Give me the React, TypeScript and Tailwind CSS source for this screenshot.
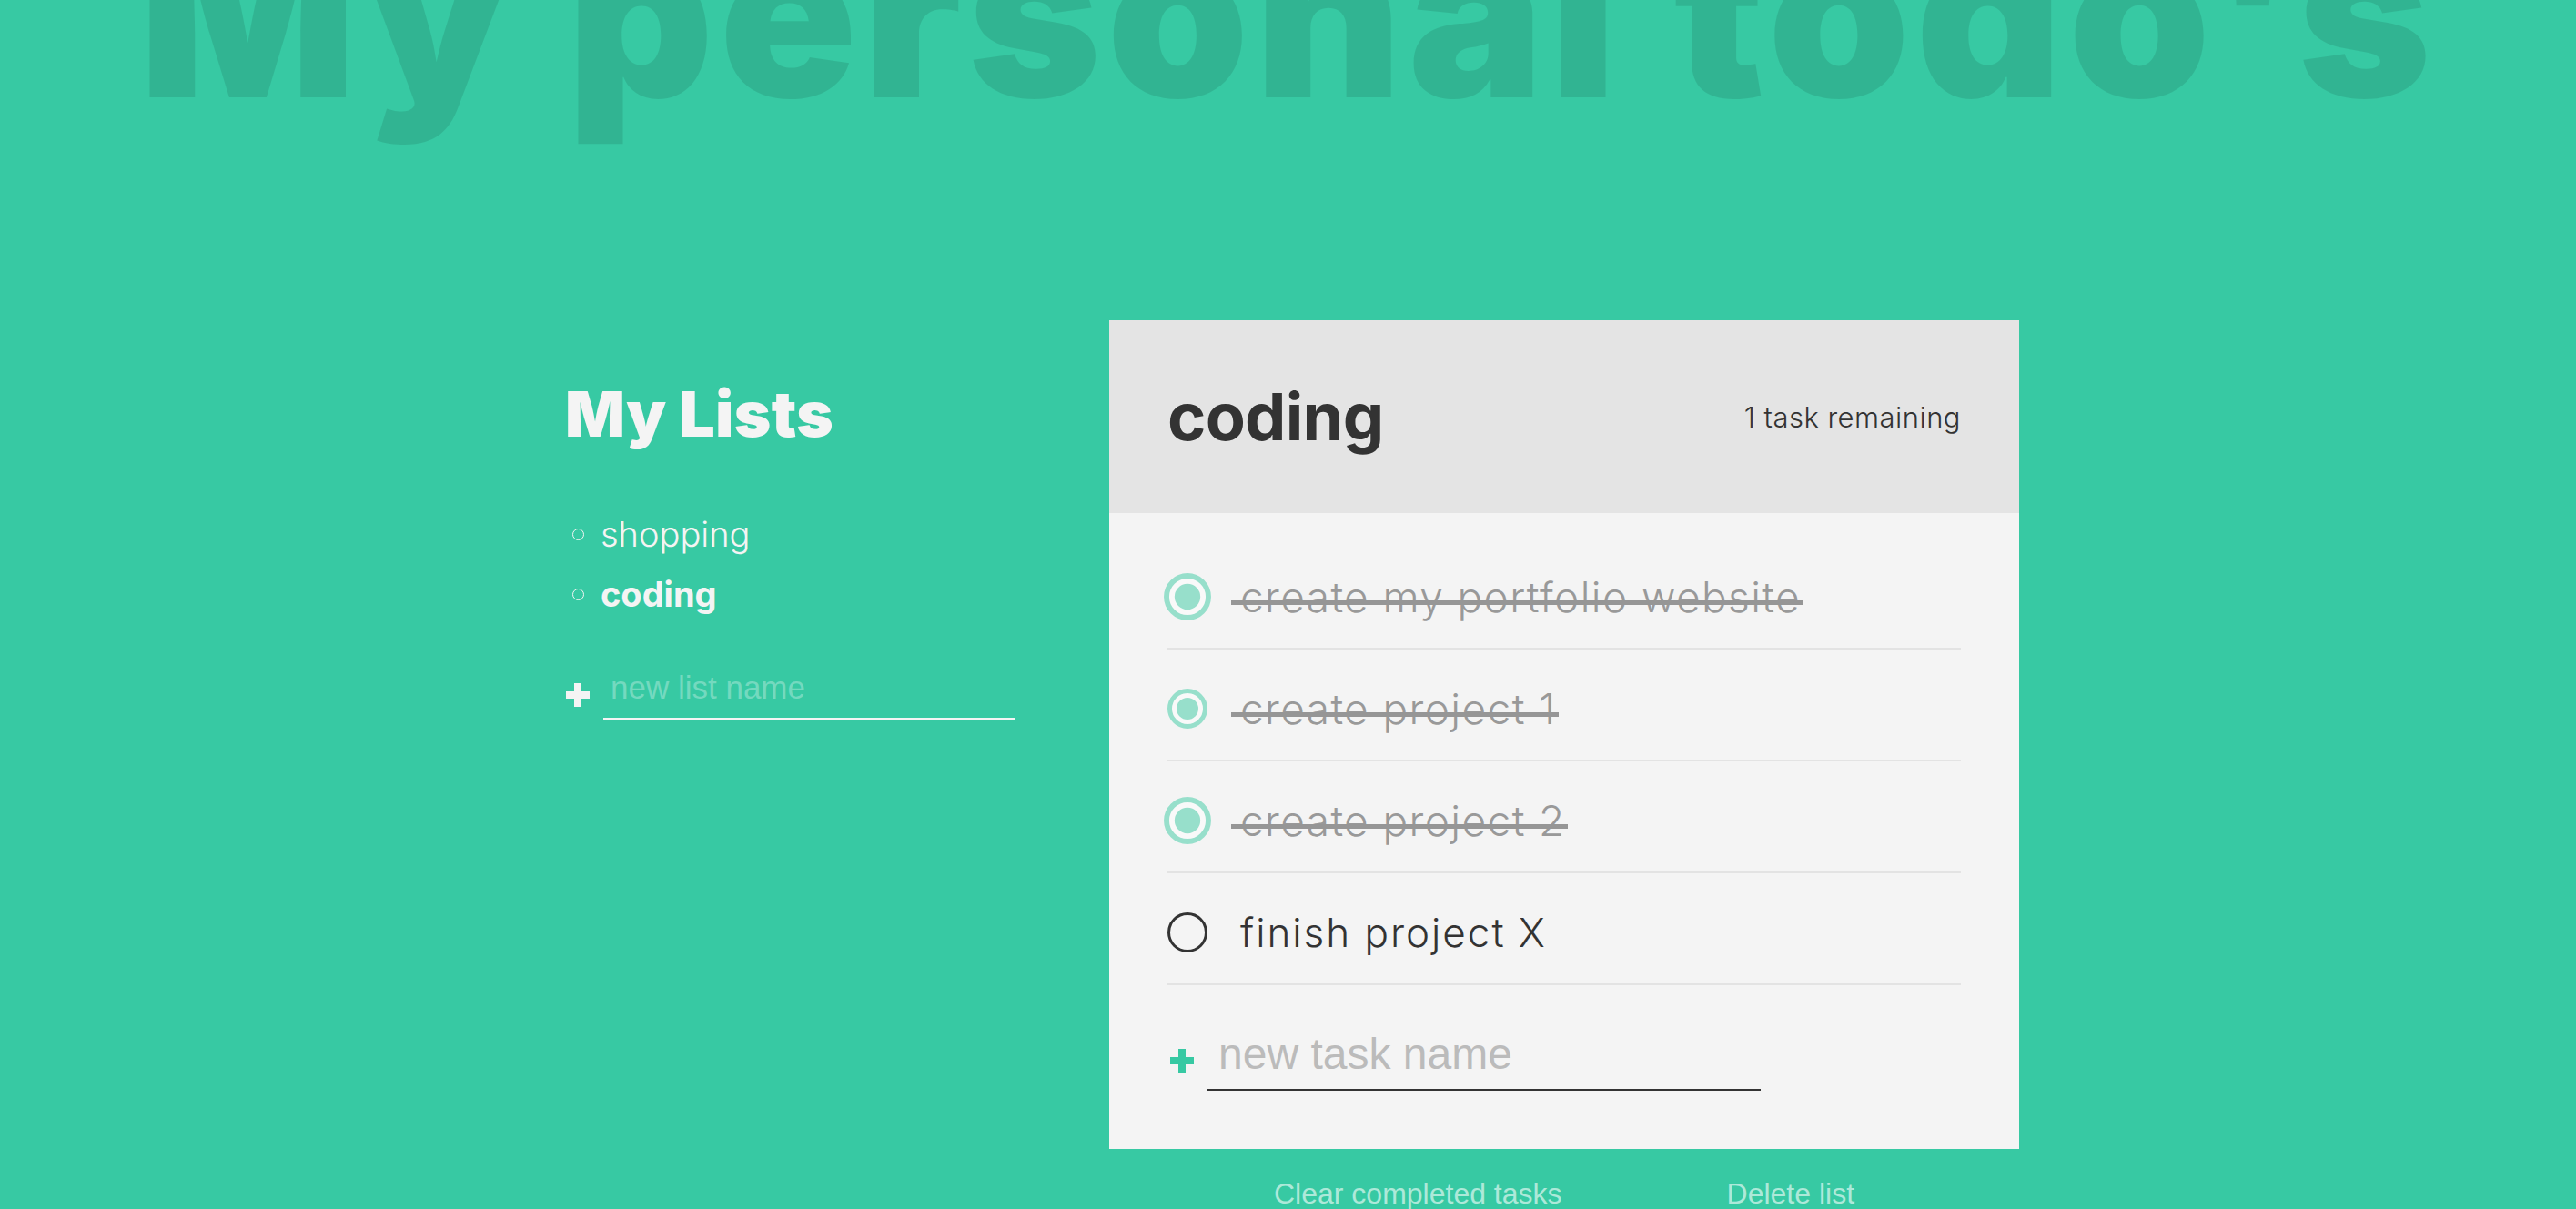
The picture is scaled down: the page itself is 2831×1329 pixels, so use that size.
import React from "react";

type Task = { id: number; name: string; done: boolean; big?: boolean };

const LISTS = [
  { id: 1, name: "shopping", active: false },
  { id: 2, name: "coding", active: true },
];

const TASKS: Task[] = [
  { id: 1, name: "create my portfolio website", done: true, big: true },
  { id: 2, name: "create project 1", done: true },
  { id: 3, name: "create project 2", done: true, big: true },
  { id: 4, name: "finish project X", done: false },
];

function PlusIcon({ className }: { className?: string }) {
  return (
    <svg viewBox="0 0 26 26" className={className} fill="currentColor">
      <rect x="9" y="0" width="8" height="26" />
      <rect x="0" y="9" width="26" height="8" />
    </svg>
  );
}

function TaskRow({ task }: { task: Task }) {
  return (
    <div className="flex h-[123px] items-center border-b-2 border-[#e3e3e3] pt-[9px]">
      <span
        className={
          "flex h-[44px] w-[44px] shrink-0 items-center justify-center rounded-full " +
          (task.done ? "border-[5px] border-[#97dfcb] bg-[#f9f9f9] " : "border-[3px] border-[#333333] ") +
          (task.big ? "scale-[1.18]" : "")
        }
      >
        {task.done && <span className="h-[24px] w-[24px] rounded-full bg-[#97dfcb]" />}
      </span>
      <span
        className={
          "relative ml-[36px] font-light leading-none " +
          (task.done
            ? "text-[46px] tracking-[0.03em] text-[#999999]"
            : "text-[44px] tracking-[0.045em] text-[#333333]")
        }
      >
        {task.name}
        {task.done && (
          <span className="absolute -left-[10px] -right-[2px] top-[58%] h-[5px] bg-[#969696]" />
        )}
      </span>
    </div>
  );
}

export default function App() {
  const remaining = TASKS.filter((t) => !t.done).length;

  return (
    <div className="min-h-screen overflow-hidden bg-[#37c9a3] font-['Inter','Noto_Sans',sans-serif]">
      <h1 className="-mt-[109px] text-center text-[250px] font-black leading-none tracking-[0.025em] text-black/10 whitespace-nowrap">
        My personal todo's
      </h1>

      <div className="mt-[211px] flex justify-center pl-[7px]">
        {/* lists column */}
        <div className="w-[600px] shrink-0 text-[#f4f4f4]">
          <h2 className="mt-[69px] ml-[2px] text-[69px] font-black leading-none tracking-[0.005em]">My Lists</h2>
          <ul className="mt-[64px]">
            {LISTS.map((l) => (
              <li key={l.id} className="flex h-[66px] items-center">
                <span className="ml-[10px] h-[13px] w-[13px] rounded-full border border-[#f4f4f4]" />
                <span
                  className={
                    "ml-[18px] text-[38px] " + (l.active ? "font-bold" : "font-light")
                  }
                >
                  {l.name}
                </span>
              </li>
            ))}
          </ul>
          <form className="mt-[50px] flex items-center" onSubmit={(e) => e.preventDefault()}>
            <PlusIcon className="ml-[3px] h-[26px] w-[26px] text-[#f4f4f4]" />
            <input
              type="text"
              placeholder="new list name"
              className="ml-[15px] w-[453px] border-b-2 border-[#f4f4f4] bg-transparent pb-[14px] pl-[8px] font-['Liberation_Sans',Arial,sans-serif] text-[35px] leading-[39px] text-[#f4f4f4] outline-none placeholder:text-[#74d9bf]"
            />
          </form>
        </div>

        {/* active list */}
        <div className="w-[1000px] shrink-0">
          <div className="flex h-[212px] items-center justify-between bg-[#e4e4e4] px-16">
            <h2 className="text-[72px] font-bold leading-none tracking-[-0.01em] text-[#333333]">coding</h2>
            <p className="text-[31px] font-light leading-none tracking-[0.015em] text-[#333333]">
              {remaining} task remaining
            </p>
          </div>
          <div className="bg-[#f4f4f4] px-16 pb-16 pt-[27px]">
            {TASKS.map((t) => (
              <TaskRow key={t.id} task={t} />
            ))}
            <form className="mt-[49px] flex items-center" onSubmit={(e) => e.preventDefault()}>
              <PlusIcon className="ml-[3px] h-[26px] w-[26px] text-[#37c9a3]" />
              <input
                type="text"
                placeholder="new task name"
                className="ml-[15px] w-[608px] border-b-2 border-[#333333] bg-transparent pb-[11px] pl-[12px] font-['Liberation_Sans',Arial,sans-serif] text-[48px] leading-[54px] text-[#333333] outline-none placeholder:text-[#bbbbbb]"
              />
            </form>
          </div>
          <div className="mt-[31px] flex justify-evenly font-['Liberation_Sans',Arial,sans-serif] text-[32px] leading-[37px] text-white/60">
            <button type="button">Clear completed tasks</button>
            <button type="button">Delete list</button>
          </div>
        </div>
      </div>
    </div>
  );
}
